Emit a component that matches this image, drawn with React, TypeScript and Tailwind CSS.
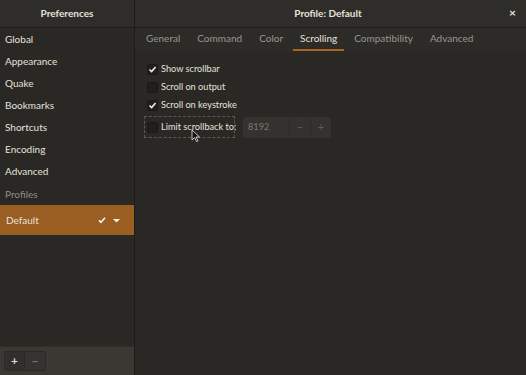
import React from "react";

const font = { fontFamily: 'Lato, "Noto Sans", sans-serif' };

function Check({ checked }: { checked: boolean }) {
  return (
    <div className="w-[11px] h-[11px] shrink-0 rounded-[2px] bg-[#201f1c] border border-[#1a1917] flex items-center justify-center">
      {checked && (
        <svg width="9" height="9" viewBox="0 0 9 9">
          <path d="M1.5 4.5 L3.6 6.6 L7.6 2" stroke="#eeeae4" strokeWidth="1.6" fill="none" />
        </svg>
      )}
    </div>
  );
}

export default function App() {
  const items = ["Global", "Appearance", "Quake", "Bookmarks", "Shortcuts", "Encoding", "Advanced"];
  const tabs = ["General", "Command", "Color", "Scrolling", "Compatibility", "Advanced"];
  return (
    <div className="w-[526px] h-[375px] flex flex-col bg-[#292824] text-[#e6e2dc] text-[10px] overflow-hidden" style={font}>
      <div className="h-[28px] flex shrink-0 bg-[#2e2d29] border-b border-[#1d1c1a]">
        <div className="w-[135px] shrink-0 border-r border-[#1d1c1a] flex items-center justify-center font-bold">Preferences</div>
        <div className="flex-1 flex items-center justify-center relative font-bold">
          <span className="ml-[-5px]">Profile: Default</span>
          <span className="absolute right-[10px] top-[7px] text-[12px] font-bold leading-none">×</span>
        </div>
      </div>
      <div className="flex flex-1 min-h-0">
        <div className="w-[135px] shrink-0 border-r border-[#1d1c1a] flex flex-col">
          <div className="flex flex-col">
            {items.map((t) => (
              <div key={t} className="h-[22px] flex items-center pl-[5px]">{t}</div>
            ))}
            <div className="h-[23px] flex items-center pl-[5px] pt-[1px] text-[#8f8c86]">Profiles</div>
            <div className="h-[30px] bg-[#9a5d22] flex items-center pl-[6px] pr-[14px]">
              <span className="flex-1">Default</span>
              <svg width="8" height="8" viewBox="0 0 8 8" className="mr-[7px]">
                <path d="M1 4.3 L3 6.3 L7 1.8" stroke="#f5f0ea" strokeWidth="1.7" fill="none" />
              </svg>
              <svg width="7" height="5" viewBox="0 0 7 5">
                <path d="M0 1 L7 1 L3.5 4.5 Z" fill="#f5f0ea" />
              </svg>
            </div>
          </div>
          <div className="flex-1" />
          <div className="h-[29px] bg-[#393833] border-t border-[#2f2e2a] flex items-center pl-[4px]">
            <div className="flex h-[20px] rounded-[2px] border border-[#2a2926] bg-[#34332f]">
              <div className="w-[20px] flex items-center justify-center bg-[#302f2b] border-r border-[#2a2926] text-[#ddd9d3] font-bold text-[12px]">+</div>
              <div className="w-[20px] flex items-center justify-center text-[#77746e] font-bold text-[12px]">−</div>
            </div>
          </div>
        </div>
        <div className="flex-1 flex flex-col">
          <div className="h-[23px] bg-[#2c2b28] flex items-stretch pl-[4px] gap-[3px]">
            {tabs.map((t) => (
              <div
                key={t}
                className={
                  "flex items-center px-[7px] border-b-2 " +
                  (t === "Scrolling" ? "border-[#a8651f] text-[#e6e2dc]" : "border-transparent text-[#99968f]")
                }
              >
                {t}
              </div>
            ))}
          </div>
          <div className="flex flex-col pl-[12px] pt-[9px] text-[9.2px]">
            <div className="h-[18px] flex items-center gap-[3px]"><Check checked /> <span>Show scrollbar</span></div>
            <div className="h-[18px] flex items-center gap-[3px]"><Check checked={false} /> <span>Scroll on output</span></div>
            <div className="h-[18px] flex items-center gap-[3px]"><Check checked /> <span>Scroll on keystroke</span></div>
            <div className="flex items-center mt-[2px]">
              <div className="relative h-[22px] w-[91px] -ml-[3px] border border-dashed border-[#5a5853] flex items-center gap-[3px] pl-[2px] whitespace-nowrap">
                <Check checked={false} /> <span>Limit scrollback to:</span>
                <svg width="10" height="14" viewBox="0 0 10 14" className="absolute left-[46px] top-[12px]">
                  <path d="M1 1 L1 11 L3.5 8.5 L5.5 12.5 L7 11.8 L5 8 L8.5 8 Z" fill="#111" stroke="#eee" strokeWidth="0.8" />
                </svg>
              </div>
              <div className="ml-[8px] h-[21px] w-[88px] flex bg-[#33322e] rounded-[2px]">
                <div className="flex-1 flex items-center pl-[5px] text-[#7d7a74]">8192</div>
                <div className="w-[21px] border-l border-[#2b2a27] flex items-center justify-center text-[#5f5d58] text-[11px]">−</div>
                <div className="w-[21px] border-l border-[#2b2a27] flex items-center justify-center text-[#5f5d58] text-[11px]">+</div>
              </div>
            </div>
          </div>
        </div>
      </div>
    </div>
  );
}
